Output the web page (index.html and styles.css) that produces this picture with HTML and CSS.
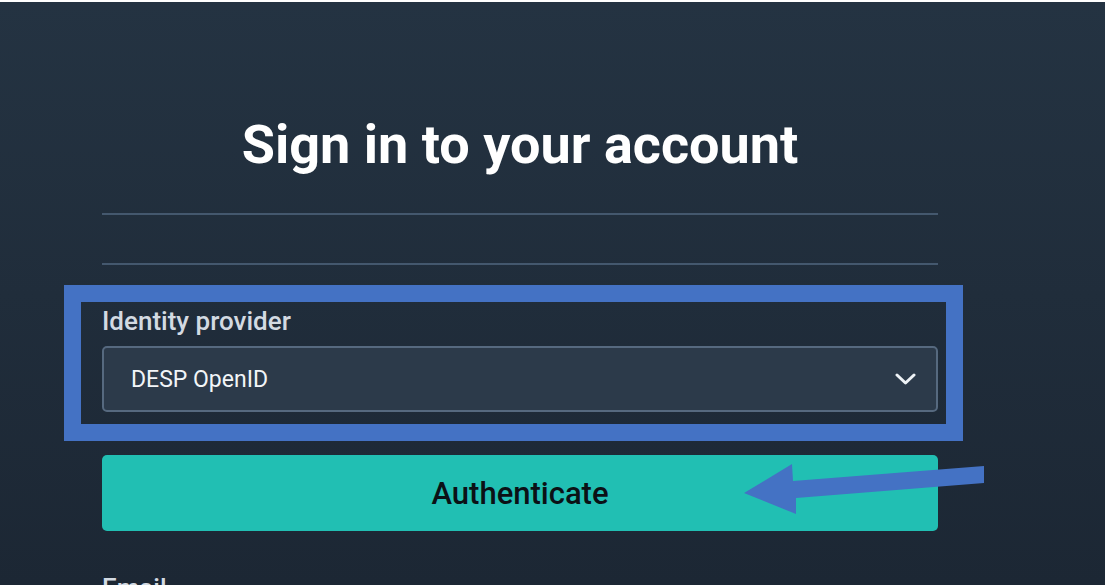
FILE: index.html
```html
<!DOCTYPE html>
<html lang="en">

<head>
    <meta charset="UTF-8">
    <meta name="viewport" content="width=device-width, initial-scale=1.0">
    <title>Sign in</title>
    <link rel="stylesheet" href="styles.css">
</head>

<body>
    <div class="page">
        <div class="container">
            <h1 class="title">Sign in to your account</h1>

            <hr class="divider">
            <hr class="divider second">

            <!-- Identity provider -->
            <div class="field provider">
                <label class="field-label" for="idp">Identity provider</label>
                <div class="select" id="idp">
                    <span>DESP OpenID</span>
                    <svg class="chevron" width="21" height="12" viewBox="0 0 21 12">
                        <polyline points="2,2 10.5,10 19,2" fill="none" stroke="#eef2f6" stroke-width="3" stroke-linecap="round" stroke-linejoin="round" />
                    </svg>
                </div>
            </div>

            <button class="btn-auth" type="button">Authenticate</button>

            <div class="field">
                <label class="field-label" for="email">Email</label>
            </div>
        </div>

        <!-- Annotation overlay -->
        <div class="highlight"></div>
        <svg class="arrow" width="1105" height="585" viewBox="0 0 1105 585">
            <polygon points="744,493 792,464 793,481 984,466 984,483 796,498 796,514" fill="#4472c4" />
        </svg>
    </div>
</body>

</html>
```

FILE: styles.css
```css
* {
    box-sizing: border-box;
}

body {
    margin: 0;
    padding: 0;
    font-family: Roboto, "Liberation Sans", Arial, sans-serif;
    background-color: #ffffff;
    overflow: hidden;
}

.page {
    position: relative;
    height: 585px;
    border-top: 2px solid #ffffff;
    background: linear-gradient(#243342, #1c2734);
    overflow: hidden;
}

.container {
    width: 836px;
    margin-left: 102px;
    padding-top: 112px;
}

.title {
    margin: 0;
    text-align: center;
    color: #ffffff;
    font-size: 54px;
    line-height: 62px;
    font-weight: 700;
}

.divider {
    margin: 37px 0 0;
    border: none;
    border-top: 2px solid #44586e;
}

.divider.second {
    margin-top: 48px;
}

.field {
    display: flex;
    flex-direction: column;
}

.provider {
    margin-top: 41px;
}

.field-label {
    color: #d3dae2;
    font-size: 26px;
    font-weight: 500;
    line-height: 30px;
    margin-bottom: 10px;
}

.select {
    display: flex;
    justify-content: space-between;
    align-items: center;
    height: 66px;
    padding: 0 20px 0 27px;
    background-color: #2c3a4a;
    border: 2px solid #56697f;
    border-radius: 5px;
    color: #f2f5f8;
    font-size: 23px;
}

.btn-auth {
    display: block;
    width: 100%;
    height: 76px;
    margin-top: 43px;
    background-color: #21bfb3;
    color: #0b1116;
    border: none;
    border-radius: 5px;
    font-family: inherit;
    font-size: 31px;
    font-weight: 500;
    cursor: pointer;
}

.btn-auth + .field {
    margin-top: 42px;
}

.highlight {
    position: absolute;
    left: 64px;
    top: 283px;
    width: 899px;
    height: 156px;
    border: 17px solid #4472c4;
}

.arrow {
    position: absolute;
    left: 0;
    top: -2px;
}
```
